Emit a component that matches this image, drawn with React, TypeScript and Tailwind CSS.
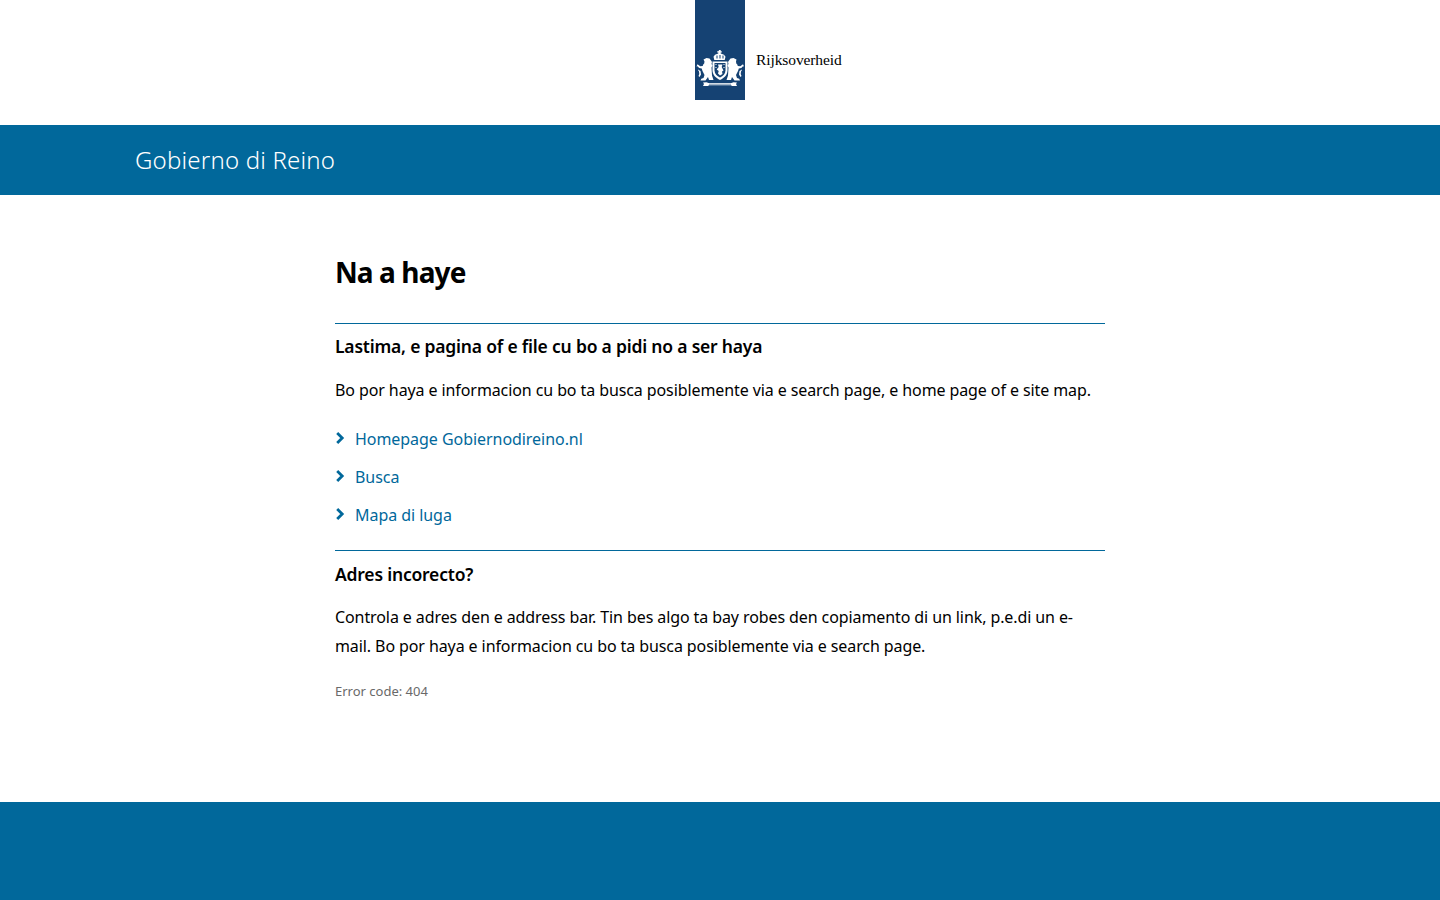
import React from "react";

const sans = "font-['Noto_Sans',sans-serif]";

function CoatOfArms() {
  return (
    <svg viewBox="0 0 50 45" className="w-[50px] h-[45px] block" fill="#fff">
      {/* crown */}
      <path d="M24.300 5h1.400v1.300h1.100v1.200h-1.100v1l3.300 1.300 1.500 2-.8 3.200H19.300l-.8-3.200 1.500-2 3.300-1.300v-1h-1.100V6.300h1.100z" />
      <path d="M21.500 10.500h1v3h-1zM24.500 10h1v3.500h-1zM27.500 10.500h1v3h-1z" fill="#154273" />
      {/* shield */}
      <path d="M17.500 16.500h15v9c0 4.500-3.500 7.500-7.500 9.500-4-2-7.500-5-7.500-9.500z" />
      <path d="M19.500 18h11v7.500c0 3.200-2.500 5.500-5.500 7-3-1.500-5.500-3.800-5.500-7z" fill="#154273" />
      <path d="M23 19.500h4.500l-.8 2.500 1.800 3.500-1.500 1 .5 2.500-2.500 1.500-2-2 .7-2.500-2-1.500 2-2.500z" />
      <path d="M20.500 19h1v1h-1zM28.500 19h1v1h-1zM20.500 22h1v1h-1zM28.500 22h1v1h-1z" />
      {/* left lion */}
      <path d="M8.500 14.500l3-1.500 3 .5 1.500 2 1 1.500-.5 2 1 1.500-1 2 .5 8 1.500 4.500h-4.500l-1-3-2.500 3.500H5.500l.8-1.800 2.200-.7 1-3-2-4-.8-2.500-2.500-.5-1.700-1.800-1 .2 1-2.200 2.700 2 2.500-.2.500-1.500 1-1 .3-2z" />
      <path d="M3 24.500l2.500 1.500.5 3.500-1.500 2.500-1-1 .8-2-.3-2.500-1-1.500z" />
      {/* right lion */}
      <path d="M41.500 14.500l-3-1.500-3 .5-1.500 2-1 1.500.5 2-1 1.500 1 2-.5 8-1.500 4.500h4.500l1-3 2.500 3.500h5.500l-.8-1.800-2.200-.7-1-3 2-4 .8-2.500 2.500-.5 1.700-1.800 1 .2-1-2.200-2.700 2-2.500-.2-.5-1.500-1-1-.3-2z" />
      <path d="M47 24.500l-2.500 1.500-.5 3.500 1.500 2.500 1-1-.8-2 .3-2.500 1-1.500z" />
      {/* motto ribbon */}
      <path d="M8 37.500l3.500-.3 2 .8h23l2-.8 3.500.3-1 1.500 1 2h-5l-1-.8H14l-1 .8H8l1-2z" />
      <path d="M14 38.800h22v.6H14z" fill="#154273" />
    </svg>
  );
}

function Chevron() {
  return (
    <svg viewBox="0 0 10 12" className="w-[10px] h-[12px] shrink-0 mr-[10px] mb-[4px]" fill="none" stroke="#01689b" strokeWidth="2.8">
      <path d="M2.200 1l5 5-5 5" />
    </svg>
  );
}

const links = ["Homepage Gobiernodireino.nl", "Busca", "Mapa di luga"];

export default function App() {
  return (
    <div className={`min-h-[900px] flex flex-col bg-white text-black ${sans}`}>
      {/* Logo */}
      <header className="h-[125px] grid grid-cols-[1fr_50px_1fr] items-start">
        <div className="col-start-2 w-[50px] h-[100px] bg-[#154273] flex flex-col justify-end pb-[10px]">
          <CoatOfArms />
        </div>
        <span className="ml-[11px] mt-[50px] font-['Liberation_Serif',serif] text-[15.5px] leading-[20px] tracking-[-0.1px]">Rijksoverheid</span>
      </header>

      {/* Site title bar */}
      <div className="h-[70px] bg-[#01689b] flex items-center pl-[135px]">
        <span className="text-[24px] text-white font-light tracking-[0.2px]">Gobierno di Reino</span>
      </div>

      {/* Content */}
      <main className="flex-1 w-[770px] mx-auto pt-[55px]">
        <h1 className="text-[28px] leading-[44px] font-bold tracking-[-0.9px]">Na a haye</h1>

        <section className="mt-[29px] border-t border-[#01689b] pt-[9px]">
          <h2 className="text-[17.5px] leading-[26px] font-semibold tracking-[-0.2px]">Lastima, e pagina of e file cu bo a pidi no a ser haya</h2>
          <p className="mt-[17px] text-[16px] leading-[29px] tracking-[-0.095px]">
            Bo por haya e informacion cu bo ta busca posiblemente via e search page, e home page of e site map.
          </p>
          <ul className="mt-[20px] flex flex-col gap-[9px] pb-[20px]">
            {links.map((l) => (
              <li key={l} className="flex items-center h-[29px]">
                <Chevron />
                <a className="text-[16px] leading-[29px] tracking-[-0.05px] text-[#01689b]">{l}</a>
              </li>
            ))}
          </ul>
        </section>

        <section className="border-t border-[#01689b] pt-[10px]">
          <h2 className="text-[17.5px] leading-[26px] font-semibold tracking-[-0.2px]">Adres incorecto?</h2>
          <p className="mt-[16px] text-[16px] leading-[29px] tracking-[-0.095px]">
            Controla e adres den e address bar. Tin bes algo ta bay robes den copiamento di un link, p.e.di un e-mail. Bo por haya e informacion cu bo ta busca posiblemente via e search page.
          </p>
          <p className="mt-[20px] text-[13px] leading-[20px] text-[#696969]">Error code: 404</p>
        </section>
      </main>

      <footer className="h-[98px] bg-[#01689b]" />
    </div>
  );
}
